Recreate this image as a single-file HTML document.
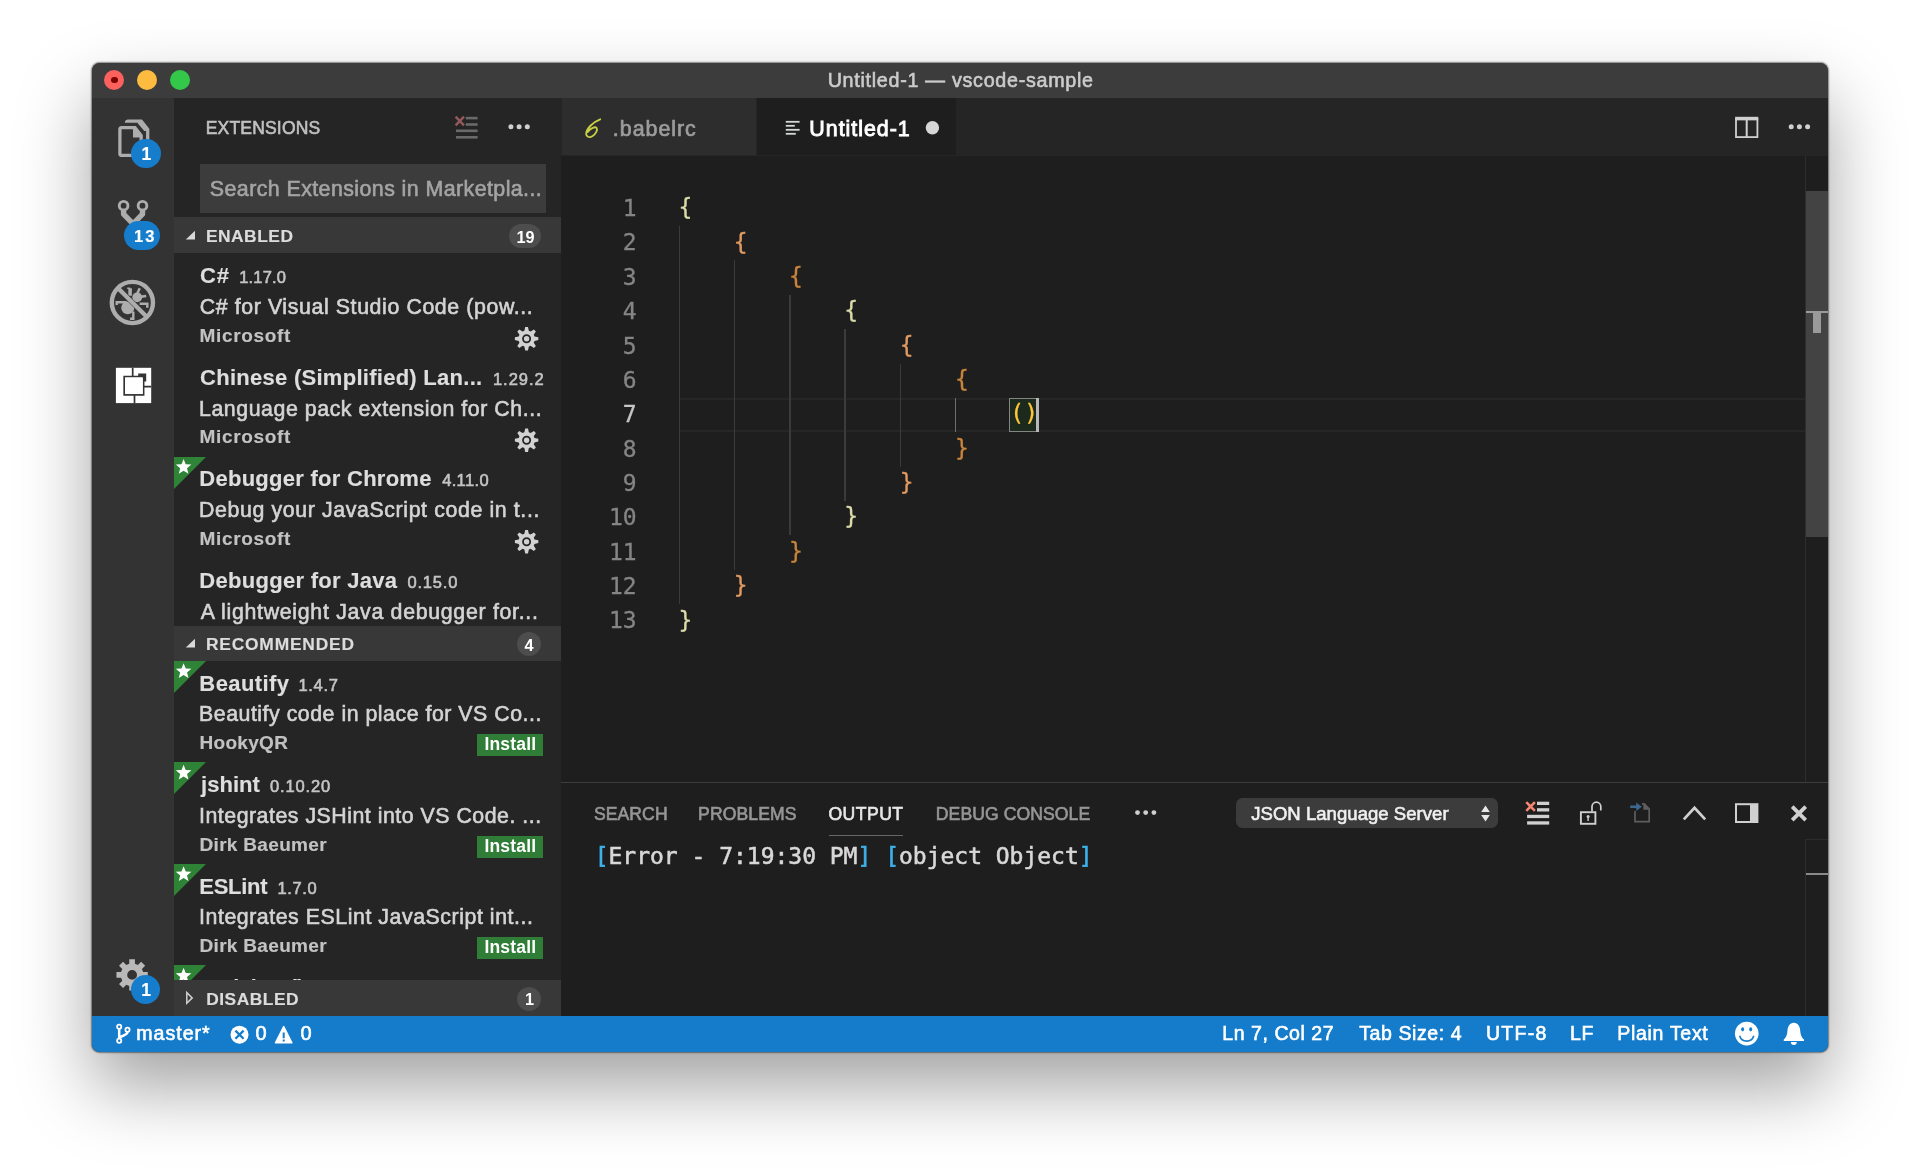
<!DOCTYPE html>
<html lang="en">
<head>
<meta charset="utf-8">
<title>Untitled-1 — vscode-sample</title>
<style>
html,body{margin:0;padding:0;}
body{width:1920px;height:1173px;background:#ffffff;position:relative;overflow:hidden;font-family:"Liberation Sans",sans-serif;}
#shadow{position:absolute;left:91.7px;top:62.6px;width:1736.7px;height:989.4px;border-radius:8px;background:#3c3c3c;
  box-shadow:0 0 1.5px 0.5px rgba(0,0,0,.45), 0 35px 72px rgba(0,0,0,.37);}
#win{position:absolute;left:92px;top:63px;width:1736.4px;height:989px;border-radius:8px;overflow:hidden;}
#in{position:absolute;left:-92px;top:-63px;width:1920px;height:1173px;will-change:transform;}
.b{position:absolute;}
.t{position:absolute;white-space:pre;line-height:30px;height:30px;-webkit-text-stroke:0.6px;}
.s{font-family:"Liberation Sans",sans-serif;}
.m{font-family:"DejaVu Sans Mono","Liberation Mono",monospace;}
.ln{position:absolute;left:561px;width:75.6px;text-align:right;font-family:"DejaVu Sans Mono","Liberation Mono",monospace;font-size:22.97px;line-height:34.36px;height:34.36px;white-space:pre;-webkit-text-stroke:0.3px;}
.cd{position:absolute;font-family:"DejaVu Sans Mono","Liberation Mono",monospace;font-size:22.97px;line-height:34.36px;height:34.36px;white-space:pre;-webkit-text-stroke:0.3px;}
.ig{position:absolute;}
svg{position:absolute;overflow:visible;}
.hdr{position:absolute;left:174px;width:387px;height:36px;background:#383838;}
.pill{position:absolute;background:#4d4d4d;border-radius:13px;}
.tri{position:absolute;left:174px;width:0;height:0;border-top:32px solid #2f8337;border-right:32px solid transparent;}
.inst{position:absolute;left:477px;width:66px;height:22px;background:#2f7d36;}
.badge{position:absolute;background:#167dcc;border-radius:15px;}
</style>
</head>
<body>
<div id="shadow"></div>
<div id="win"><div id="in">
  <!-- base blocks -->
  <div class="b" style="left:92px;top:62px;width:1737px;height:36px;background:#3c3c3c;"></div>
  <div class="b" style="left:92px;top:98px;width:82px;height:918px;background:#333333;"></div>
  <div class="b" style="left:174px;top:98px;width:387px;height:918px;background:#252526;"></div>
  <div class="b" style="left:561px;top:98px;width:1268px;height:918px;background:#1e1e1e;"></div>
  <div class="b" style="left:561px;top:98px;width:1268px;height:57.5px;background:#252526;"></div>
  <div class="b" style="left:561.5px;top:98px;width:194.5px;height:57px;background:#2d2d2d;"></div>
  <div class="b" style="left:756.5px;top:98px;width:199.8px;height:57.4px;background:#1e1e1e;"></div>
  <div class="b" style="left:92px;top:1016px;width:1737px;height:36px;background:#157ccb;"></div>
  <!-- traffic lights -->
  <div class="b" style="left:104.4px;top:70px;width:20px;height:20px;border-radius:50%;background:#fc615d;"></div>
  <div class="b" style="left:111.2px;top:76.9px;width:6.4px;height:6.4px;border-radius:50%;background:#7a0400;"></div>
  <div class="b" style="left:137.2px;top:70px;width:20px;height:20px;border-radius:50%;background:#fdbc40;"></div>
  <div class="b" style="left:170px;top:70px;width:20px;height:20px;border-radius:50%;background:#34c84a;"></div>

  <!-- sidebar -->
  <div class="b" style="left:200px;top:163.5px;width:346px;height:49px;background:#3c3c3c;"></div>
  <div class="hdr" style="top:217.3px;"></div>
  <!--ROWDECOR-->
  <div class="tri" style="top:456.5px;"></div>
  <div class="tri" style="top:660.8px;"></div>
  <div class="tri" style="top:762.3px;"></div>
  <div class="tri" style="top:863.8px;"></div>
  <div class="tri" style="top:965.3px;"></div>
  <div class="inst" style="top:734px;"></div>
  <div class="inst" style="top:835.5px;"></div>
  <div class="inst" style="top:937px;"></div>

<span class="t s" style="left:200.01px;top:261.00px;font-size:22.0px;color:#dedede;letter-spacing:0.769px;font-weight:700;-webkit-text-stroke:0.15px;">C#</span>
<span class="t s" style="left:239.27px;top:262.00px;font-size:16.5px;color:#c4c4c4;letter-spacing:0.154px;">1.17.0</span>
<span class="t s" style="left:199.70px;top:292.00px;font-size:21.3px;color:#d4d4d4;letter-spacing:0.617px;">C# for Visual Studio Code (pow...</span>
<span class="t s" style="left:199.51px;top:321.00px;font-size:19px;color:#c2c2c2;letter-spacing:0.673px;font-weight:700;-webkit-text-stroke:0.15px;">Microsoft</span>
<span class="t s" style="left:200.01px;top:363.00px;font-size:22.0px;color:#dedede;letter-spacing:0.275px;font-weight:700;-webkit-text-stroke:0.15px;">Chinese (Simplified) Lan...</span>
<span class="t s" style="left:492.97px;top:364.00px;font-size:16.5px;color:#c4c4c4;letter-spacing:0.965px;">1.29.2</span>
<span class="t s" style="left:199.04px;top:394.00px;font-size:21.3px;color:#d4d4d4;letter-spacing:0.567px;">Language pack extension for Ch...</span>
<span class="t s" style="left:199.51px;top:422.00px;font-size:19px;color:#c2c2c2;letter-spacing:0.673px;font-weight:700;-webkit-text-stroke:0.15px;">Microsoft</span>
<span class="t s" style="left:199.32px;top:464.00px;font-size:22.0px;color:#dedede;letter-spacing:0.265px;font-weight:700;-webkit-text-stroke:0.15px;">Debugger for Chrome</span>
<span class="t s" style="left:442.14px;top:465.00px;font-size:16.5px;color:#c4c4c4;letter-spacing:0.364px;">4.11.0</span>
<span class="t s" style="left:199.04px;top:495.00px;font-size:21.3px;color:#d4d4d4;letter-spacing:0.628px;">Debug your JavaScript code in t...</span>
<span class="t s" style="left:199.51px;top:524.00px;font-size:19px;color:#c2c2c2;letter-spacing:0.673px;font-weight:700;-webkit-text-stroke:0.15px;">Microsoft</span>
<span class="t s" style="left:199.32px;top:566.00px;font-size:22.0px;color:#dedede;letter-spacing:0.286px;font-weight:700;-webkit-text-stroke:0.15px;">Debugger for Java</span>
<span class="t s" style="left:407.48px;top:567.00px;font-size:16.5px;color:#c4c4c4;letter-spacing:0.810px;">0.15.0</span>
<span class="t s" style="left:200.70px;top:597.00px;font-size:21.3px;color:#d4d4d4;letter-spacing:0.711px;">A lightweight Java debugger for...</span>
<span class="t s" style="left:199.32px;top:669.00px;font-size:22.0px;color:#dedede;letter-spacing:0.427px;font-weight:700;-webkit-text-stroke:0.15px;">Beautify</span>
<span class="t s" style="left:298.47px;top:670.00px;font-size:16.5px;color:#c4c4c4;letter-spacing:0.675px;">1.4.7</span>
<span class="t s" style="left:199.04px;top:699.00px;font-size:21.3px;color:#d4d4d4;letter-spacing:0.529px;">Beautify code in place for VS Co...</span>
<span class="t s" style="left:199.51px;top:728.00px;font-size:19px;color:#c2c2c2;letter-spacing:0.297px;font-weight:700;-webkit-text-stroke:0.15px;">HookyQR</span>
<span class="t s" style="left:484.41px;top:729.00px;font-size:17.5px;color:#ffffff;letter-spacing:0.193px;font-weight:700;-webkit-text-stroke:0px;">Install</span>
<span class="t s" style="left:201.04px;top:770.00px;font-size:22.0px;color:#dedede;letter-spacing:0.020px;font-weight:700;-webkit-text-stroke:0.15px;">jshint</span>
<span class="t s" style="left:269.98px;top:771.00px;font-size:16.5px;color:#c4c4c4;letter-spacing:0.879px;">0.10.20</span>
<span class="t s" style="left:199.04px;top:801.00px;font-size:21.3px;color:#d4d4d4;letter-spacing:0.522px;">Integrates JSHint into VS Code. ...</span>
<span class="t s" style="left:199.51px;top:830.00px;font-size:19px;color:#c2c2c2;letter-spacing:0.318px;font-weight:700;-webkit-text-stroke:0.15px;">Dirk Baeumer</span>
<span class="t s" style="left:484.41px;top:831.00px;font-size:17.5px;color:#ffffff;letter-spacing:0.193px;font-weight:700;-webkit-text-stroke:0px;">Install</span>
<span class="t s" style="left:199.32px;top:872.00px;font-size:22.0px;color:#dedede;letter-spacing:-0.296px;font-weight:700;-webkit-text-stroke:0.15px;">ESLint</span>
<span class="t s" style="left:277.47px;top:873.00px;font-size:16.5px;color:#c4c4c4;letter-spacing:0.636px;">1.7.0</span>
<span class="t s" style="left:199.04px;top:902.00px;font-size:21.3px;color:#d4d4d4;letter-spacing:0.558px;">Integrates ESLint JavaScript int...</span>
<span class="t s" style="left:199.51px;top:931.00px;font-size:19px;color:#c2c2c2;letter-spacing:0.318px;font-weight:700;-webkit-text-stroke:0.15px;">Dirk Baeumer</span>
<span class="t s" style="left:484.41px;top:932.00px;font-size:17.5px;color:#ffffff;letter-spacing:0.193px;font-weight:700;-webkit-text-stroke:0px;">Install</span>
<span class="t s" style="left:199.32px;top:973.00px;font-size:22.0px;color:#dedede;letter-spacing:-2.157px;font-weight:700;-webkit-text-stroke:0.15px;">markdownlint</span>
<span class="t s" style="left:328.98px;top:974.00px;font-size:16.5px;color:#c4c4c4;letter-spacing:0.610px;">0.22.0</span>
<svg width="1920" height="1173" viewBox="0 0 1920 1173" style="left:0;top:0"><path fill="#ffffff" d="M183.60 458.90 L185.72 464.19 L191.40 464.57 L187.02 468.21 L188.42 473.73 L183.60 470.70 L178.78 473.73 L180.18 468.21 L175.80 464.57 L181.48 464.19Z"/>
<path fill="#ffffff" d="M183.60 663.20 L185.72 668.49 L191.40 668.87 L187.02 672.51 L188.42 678.03 L183.60 675.00 L178.78 678.03 L180.18 672.51 L175.80 668.87 L181.48 668.49Z"/>
<path fill="#ffffff" d="M183.60 764.70 L185.72 769.99 L191.40 770.37 L187.02 774.01 L188.42 779.53 L183.60 776.50 L178.78 779.53 L180.18 774.01 L175.80 770.37 L181.48 769.99Z"/>
<path fill="#ffffff" d="M183.60 866.20 L185.72 871.49 L191.40 871.87 L187.02 875.51 L188.42 881.03 L183.60 878.00 L178.78 881.03 L180.18 875.51 L175.80 871.87 L181.48 871.49Z"/>
<path fill="#ffffff" d="M183.60 967.70 L185.72 972.99 L191.40 973.37 L187.02 977.01 L188.42 982.53 L183.60 979.50 L178.78 982.53 L180.18 977.01 L175.80 973.37 L181.48 972.99Z"/>
<path fill-rule="evenodd" fill="#d2d2d2" d="M524.37 330.81 L525.21 326.98 L527.99 326.98 L528.83 330.81 L530.61 331.55 L533.91 329.43 L535.87 331.39 L533.75 334.69 L534.49 336.47 L538.32 337.31 L538.32 340.09 L534.49 340.93 L533.75 342.71 L535.87 346.01 L533.91 347.97 L530.61 345.85 L528.83 346.59 L527.99 350.42 L525.21 350.42 L524.37 346.59 L522.59 345.85 L519.29 347.97 L517.33 346.01 L519.45 342.71 L518.71 340.93 L514.88 340.09 L514.88 337.31 L518.71 336.47 L519.45 334.69 L517.33 331.39 L519.29 329.43 L522.59 331.55ZM522.10 338.70a4.50 4.50 0 1 0 9.00 0a4.50 4.50 0 1 0 -9.00 0Z"/><circle cx="526.6" cy="338.7" r="2.7" fill="#d2d2d2"/>
<path fill-rule="evenodd" fill="#d2d2d2" d="M524.37 432.31 L525.21 428.48 L527.99 428.48 L528.83 432.31 L530.61 433.05 L533.91 430.93 L535.87 432.89 L533.75 436.19 L534.49 437.97 L538.32 438.81 L538.32 441.59 L534.49 442.43 L533.75 444.21 L535.87 447.51 L533.91 449.47 L530.61 447.35 L528.83 448.09 L527.99 451.92 L525.21 451.92 L524.37 448.09 L522.59 447.35 L519.29 449.47 L517.33 447.51 L519.45 444.21 L518.71 442.43 L514.88 441.59 L514.88 438.81 L518.71 437.97 L519.45 436.19 L517.33 432.89 L519.29 430.93 L522.59 433.05ZM522.10 440.20a4.50 4.50 0 1 0 9.00 0a4.50 4.50 0 1 0 -9.00 0Z"/><circle cx="526.6" cy="440.2" r="2.7" fill="#d2d2d2"/>
<path fill-rule="evenodd" fill="#d2d2d2" d="M524.37 533.81 L525.21 529.98 L527.99 529.98 L528.83 533.81 L530.61 534.55 L533.91 532.43 L535.87 534.39 L533.75 537.69 L534.49 539.47 L538.32 540.31 L538.32 543.09 L534.49 543.93 L533.75 545.71 L535.87 549.01 L533.91 550.97 L530.61 548.85 L528.83 549.59 L527.99 553.42 L525.21 553.42 L524.37 549.59 L522.59 548.85 L519.29 550.97 L517.33 549.01 L519.45 545.71 L518.71 543.93 L514.88 543.09 L514.88 540.31 L518.71 539.47 L519.45 537.69 L517.33 534.39 L519.29 532.43 L522.59 534.55ZM522.10 541.70a4.50 4.50 0 1 0 9.00 0a4.50 4.50 0 1 0 -9.00 0Z"/><circle cx="526.6" cy="541.7" r="2.7" fill="#d2d2d2"/></svg>
  <!-- editor current line -->
  <div class="b" style="left:679.6px;top:397.9px;width:1126px;height:30.4px;border-top:2px solid #262626;border-bottom:2px solid #262626;"></div>
  <!-- bracket match box + cursor -->
  <div class="b" style="left:1009px;top:398px;width:27px;height:32px;border:1.2px solid #858585;background:#1c2a1e;"></div>
  <div class="b" style="left:1036px;top:398px;width:2.6px;height:34.4px;background:#b8b8b8;"></div>
  <!-- scrollbar -->
  <div class="b" style="left:1805.3px;top:155.5px;width:1.2px;height:626px;background:#2e2e2e;"></div>
  <div class="b" style="left:1805.5px;top:191.4px;width:24px;height:346px;background:#434343;"></div>
  <div class="b" style="left:1805.5px;top:311px;width:24px;height:2px;background:#9a9a9a;"></div>
  <div class="b" style="left:1813.3px;top:312px;width:8px;height:20.5px;background:#9a9a9a;"></div>
<span class="ln" style="top:191.10px;color:#858585">1</span>
<span class="ln" style="top:225.46px;color:#858585">2</span>
<span class="ln" style="top:259.82px;color:#858585">3</span>
<span class="ln" style="top:294.18px;color:#858585">4</span>
<span class="ln" style="top:328.54px;color:#858585">5</span>
<span class="ln" style="top:362.90px;color:#858585">6</span>
<span class="ln" style="top:397.26px;color:#c6c6c6">7</span>
<span class="ln" style="top:431.62px;color:#858585">8</span>
<span class="ln" style="top:465.98px;color:#858585">9</span>
<span class="ln" style="top:500.34px;color:#858585">10</span>
<span class="ln" style="top:534.70px;color:#858585">11</span>
<span class="ln" style="top:569.06px;color:#858585">12</span>
<span class="ln" style="top:603.42px;color:#858585">13</span>
<span class="cd" style="left:678.40px;top:190.20px;color:#dcdcaa">{</span>
<span class="cd" style="left:678.40px;top:602.52px;color:#dcdcaa">}</span>
<span class="cd" style="left:733.72px;top:224.56px;color:#e09a62">{</span>
<span class="cd" style="left:733.72px;top:568.16px;color:#e09a62">}</span>
<span class="cd" style="left:789.04px;top:258.92px;color:#c8843c">{</span>
<span class="cd" style="left:789.04px;top:533.80px;color:#c8843c">}</span>
<span class="cd" style="left:844.36px;top:293.28px;color:#dcdcaa">{</span>
<span class="cd" style="left:844.36px;top:499.44px;color:#dcdcaa">}</span>
<span class="cd" style="left:899.68px;top:327.64px;color:#e09a62">{</span>
<span class="cd" style="left:899.68px;top:465.08px;color:#e09a62">}</span>
<span class="cd" style="left:955.00px;top:362.00px;color:#c8843c">{</span>
<span class="cd" style="left:955.00px;top:430.72px;color:#c8843c">}</span>
<span class="cd" style="left:1010.32px;top:396.36px;color:#ffc638">()</span>
<div class="ig" style="left:678.70px;top:226.06px;height:377.96px;width:1.4px;background:#3b3b3b"></div>
<div class="ig" style="left:733.95px;top:260.42px;height:309.24px;width:1.4px;background:#3b3b3b"></div>
<div class="ig" style="left:789.20px;top:294.78px;height:240.52px;width:1.4px;background:#3b3b3b"></div>
<div class="ig" style="left:844.45px;top:329.14px;height:171.80px;width:1.4px;background:#3b3b3b"></div>
<div class="ig" style="left:899.70px;top:363.50px;height:103.08px;width:1.4px;background:#3b3b3b"></div>
<div class="ig" style="left:954.95px;top:397.86px;height:34.36px;width:1.5px;background:#6e6e6e"></div>
<span class="cd" style="left:594.7px;top:839.0px;color:#d8d8d8;-webkit-text-stroke:0.55px"><span style="color:#3cb1ea">[</span>Error - 7:19:30 PM<span style="color:#3cb1ea">]</span> <span style="color:#3cb1ea">[</span>object Object<span style="color:#3cb1ea">]</span></span>
  <!-- panel -->
  <div class="b" style="left:561px;top:781.6px;width:1268px;height:1.4px;background:#3d3d3d;"></div>
  <div class="b" style="left:828.5px;top:834.5px;width:74px;height:1.3px;background:#666666;"></div>
  <div class="b" style="left:1236px;top:798.2px;width:262px;height:29.8px;border-radius:6.5px;background:#3c3c3c;"></div>
  <div class="b" style="left:1805.3px;top:839.3px;width:1.2px;height:177px;background:#2e2e2e;"></div>
  <div class="b" style="left:1805.3px;top:839.3px;width:24px;height:1.2px;background:#2c2c2c;"></div>
  <div class="b" style="left:1805.5px;top:872.6px;width:24px;height:2px;background:#8a8a8a;"></div>
<!--PANELTEXT-->

  <!-- section headers (over rows) -->
  <div class="hdr" style="top:625.5px;height:35.3px;"></div>
  <div class="hdr" style="top:980px;"></div>
  <div class="pill" style="left:509px;top:224.4px;width:32px;height:24px;"></div>
  <div class="pill" style="left:517px;top:632px;width:24.3px;height:24px;"></div>
  <div class="pill" style="left:517px;top:986.5px;width:24.3px;height:24px;"></div>

<svg width="1920" height="1173" viewBox="0 0 1920 1173" style="left:0;top:0"><g transform="translate(106.8 112.9) scale(1.636)"><path fill="#adadad" d="M17.705 8H9s-2 .078-2 2v15s0 2 2 2l11-.004C22 27 22 25 22 25V13.509L17.705 8zM16 10v5h4v10H9V10h7zm5.509-6H13s-1.974.078-2 2h8v.454L22.931 11H24v12c2 0 2-1.995 2-1.995V9.648L21.509 4z"/></g>
<g fill="none" stroke="#adadad"><circle cx="123.6" cy="205.7" r="4.35" stroke-width="2.9"/><circle cx="142.5" cy="205.7" r="4.35" stroke-width="2.9"/><path stroke-width="5.4" stroke-linejoin="round" d="M123.6 210.8v3.4l9.45 9.6l9.45-9.600v-3.400"/><path stroke-width="5.4" d="M133.05 222v10"/></g>
<g><circle cx="132.4" cy="302.5" r="20.6" fill="none" stroke="#adadad" stroke-width="4.4"/><clipPath id="cpa"><path d="M100 273.800l50 50v16h-50z"/></clipPath><clipPath id="cpb"><path d="M110 276.400l50 50v-56h-50z"/></clipPath><g clip-path="url(#cpa)"><ellipse cx="127.800" cy="307.800" rx="6.600" ry="6.400" fill="#adadad"/><path fill="none" stroke="#adadad" stroke-width="2.400" d="M116.700 305v-2.700h10M133.300 311.500v7.200h-3.200"/></g><g clip-path="url(#cpb)"><circle cx="137.200" cy="297.300" r="4.900" fill="#adadad"/><path fill="none" stroke="#adadad" stroke-width="3.600" d="M130.100 288.300v7.500"/><path fill="none" stroke="#adadad" stroke-width="1.600" d="M127.200 288.300h3"/><path fill="none" stroke="#adadad" stroke-width="2.500" d="M136.800 294.500l2.900-6.200M140.800 296.800l5.400-0.900M139.600 303.700h7.700v4"/></g><path stroke="#adadad" stroke-width="4.300" d="M117.600 287.700l29.600 29.600"/></g>
<g transform="translate(115.9 367.8)"><rect x="0" y="0" width="35.3" height="35.3" fill="#ffffff"/><g fill="none" stroke="#333333" stroke-width="1.700"><rect x="8.3" y="8.800" width="19.400" height="18.300"/><path d="M16.800 0v8.800M27.700 18.900h7.600M18.600 27.100v8.200"/></g><path fill="#333333" d="M22.300 5.800h8v8h-2.600v-5.400h-5.400z"/><rect x="9.200" y="9.700" width="17.600" height="16.500" fill="#ffffff"/></g>
<path fill-rule="evenodd" fill="#b9b9b9" d="M129.26 963.86 L129.24 959.26 L134.96 959.26 L134.94 963.86 L137.90 965.09 L141.14 961.82 L145.18 965.86 L141.91 969.10 L143.14 972.06 L147.74 972.04 L147.74 977.76 L143.14 977.74 L141.91 980.70 L145.18 983.94 L141.14 987.98 L137.90 984.71 L134.94 985.94 L134.96 990.54 L129.24 990.54 L129.26 985.94 L126.30 984.71 L123.06 987.98 L119.02 983.94 L122.29 980.70 L121.06 977.74 L116.46 977.76 L116.46 972.04 L121.06 972.06 L122.29 969.10 L119.02 965.86 L123.06 961.82 L126.30 965.09ZM127.20 974.90a4.90 4.90 0 1 0 9.80 0a4.90 4.90 0 1 0 -9.80 0Z"/>
<g fill="#6a6a6a"><rect x="465.800" y="116.800" width="11.800" height="2.600"/><rect x="465.800" y="123.200" width="11.800" height="2.600"/><rect x="456" y="129.500" width="21.600" height="2.600"/><rect x="456" y="136" width="21.600" height="2.600"/></g><path stroke="#94595a" stroke-width="2.400" fill="none" d="M455.600 116.600l8.400 8.800M464 116.600l-8.400 8.800"/>
<g fill="#d0d0d0"><circle cx="510.900" cy="126.800" r="2.500"/><circle cx="519.100" cy="126.800" r="2.500"/><circle cx="527.300" cy="126.800" r="2.500"/></g>
<path fill="#d8d8d8" d="M195 230.7v8.900h-9.200z"/>
<path fill="#d8d8d8" d="M195 638.7v8.900h-9.200z"/>
<path fill="none" stroke="#d0d0d0" stroke-width="1.500" stroke-linejoin="miter" d="M186.800 992.600l5.400 5.300l-5.400 5.300z"/>
<path fill="none" stroke="#c9d244" stroke-width="1.800" stroke-linecap="round" d="M600.200 119.300C593 122 586.800 128.500 586.200 133.200C585.800 137 589.500 138 592.600 136C596 133.800 597.800 130 596.600 128C595.400 126.200 590.500 128 587.800 132"/>
<g fill="#d4d7d6"><rect x="785.800" y="120.900" width="13.800" height="1.800"/><rect x="785.800" y="124.900" width="9" height="1.800"/><rect x="785.800" y="128.900" width="13.800" height="1.800"/><rect x="785.800" y="132.900" width="10" height="1.800"/></g>
<circle cx="932.400" cy="127.800" r="6.700" fill="#d6d6d6"/>
<g fill="none" stroke="#d0d0d0"><rect x="1736" y="119.300" width="21.400" height="17.800" stroke-width="1.800"/><path stroke-width="3.400" d="M1735.100 118.500h23.200"/><path stroke-width="2" d="M1746.700 119v18"/></g>
<g fill="#d0d0d0"><circle cx="1791.200" cy="126.800" r="2.500"/><circle cx="1799.400" cy="126.800" r="2.500"/><circle cx="1807.600" cy="126.800" r="2.500"/></g>
<g fill="#cfcfcf"><circle cx="1137.500" cy="812.600" r="2.400"/><circle cx="1145.700" cy="812.600" r="2.400"/><circle cx="1153.900" cy="812.600" r="2.400"/></g>
<path fill="#e8e8e8" d="M1485.500 805.400l4.300 6.700h-8.600zM1485.500 821.600l4.300-6.700h-8.600z"/>
<g fill="#d0d0d0"><rect x="1537" y="801.700" width="12.200" height="3.300"/><rect x="1537" y="808.200" width="12.200" height="3.300"/><rect x="1527.100" y="814.800" width="22.100" height="3.300"/><rect x="1527.100" y="821.300" width="22.100" height="3.300"/></g><path stroke="#f48771" stroke-width="2.600" fill="none" d="M1526.300 802.200l8.600 8.600M1534.900 802.200l-8.600 8.600"/>
<g fill="none" stroke="#d0d0d0"><rect x="1580.900" y="812.200" width="14.500" height="11.600" stroke-width="1.900"/><path stroke-width="1.700" d="M1592 811.400v-4.800a4.400 4.400 0 0 1 8.800 0v3.800"/></g><circle cx="1588.100" cy="816.400" r="1.500" fill="#d0d0d0"/><rect x="1587.400" y="816.400" width="1.400" height="4.600" fill="#d0d0d0"/>
<path fill="none" stroke="#5e5e5e" stroke-width="1.700" d="M1635 811v10.700h14.200v-12.800l-5-5h-2.200"/><path fill="#5e5e5e" d="M1643.400 803.300l6.400 6.400h-6.400z"/><path fill="#3c688d" d="M1630.200 805.500h6v-3l5.600 4.300l-5.600 4.300v-3h-6z"/>
<path fill="none" stroke="#d0d0d0" stroke-width="2.700" d="M1683.800 819.400l10.700-11.600l10.700 11.600"/>
<rect x="1736" y="804.200" width="21.400" height="17.800" fill="none" stroke="#d0d0d0" stroke-width="2"/><rect x="1750" y="804" width="8" height="18" fill="#d0d0d0"/>
<path stroke="#d0d0d0" stroke-width="3.800" fill="none" d="M1792.200 806.600l13.500 13.500M1805.700 806.600l-13.500 13.500"/>
<g fill="none" stroke="#ffffff" stroke-width="1.800"><circle cx="119.200" cy="1026.700" r="2.100"/><circle cx="119.200" cy="1040.700" r="2.100"/><circle cx="127.500" cy="1029.700" r="2.100"/><path stroke-width="2.500" d="M119.200 1029.200v9.100M127.500 1032c-0.300 4.200-7.600 3.200-8.100 6.600"/></g>
<circle cx="239.500" cy="1034.700" r="9" fill="#ffffff"/><path stroke="#157dcb" stroke-width="2.300" d="M235.400 1030.600l8.200 8.200M243.600 1030.600l-8.200 8.200"/>
<path fill="#ffffff" stroke="#ffffff" stroke-width="1.500" stroke-linejoin="round" d="M283.700 1026.600l8.200 16.200h-16.400z"/><path stroke="#157dcb" stroke-width="2" d="M283.700 1032.500v5.700M283.700 1039.400v2"/>
<circle cx="1746.750" cy="1033.600" r="11.800" fill="#ffffff"/><ellipse cx="1742.600" cy="1029.300" rx="1.500" ry="2.100" fill="#157dcb"/><ellipse cx="1750.700" cy="1029.300" rx="1.500" ry="2.100" fill="#157dcb"/><path fill="none" stroke="#157dcb" stroke-width="1.600" d="M1739.600 1035.800a7.400 7.400 0 0 0 14.200 0"/>
<path fill="#ffffff" d="M1793.850 1022.800c4.300 0 6.100 3.800 6.400 8.200c0.200 4 1.500 6.700 3.700 8.600v1.300h-20.200v-1.300c2.200-1.900 3.500-4.600 3.700-8.600c0.300-4.400 2.100-8.200 6.400-8.200zM1790.900 1042.100h5.900a2.950 2.950 0 0 1-5.900 0z"/></svg>
  <!-- activity badges -->
  <div class="badge" style="left:131.4px;top:139.1px;width:29.2px;height:29.2px;"></div>
  <div class="badge" style="left:124px;top:220.7px;width:36.2px;height:29.3px;"></div>
  <div class="badge" style="left:131.1px;top:974.9px;width:29.2px;height:29.2px;"></div>

<span class="t s" style="left:827.67px;top:65.00px;font-size:19.7px;color:#cccccc;letter-spacing:0.723px;">Untitled-1 — vscode-sample</span>
<span class="t s" style="left:205.73px;top:113.00px;font-size:17.5px;color:#c0c0c0;letter-spacing:0.189px;">EXTENSIONS</span>
<span class="t s" style="left:209.83px;top:174.00px;font-size:21.4px;color:#a4a4a4;letter-spacing:0.416px;">Search Extensions in Marketpla...</span>
<span class="t s" style="left:205.91px;top:221.00px;font-size:17.4px;color:#dcdcdc;letter-spacing:0.498px;font-weight:700;-webkit-text-stroke:0.15px;">ENABLED</span>
<span class="t s" style="left:205.91px;top:629.00px;font-size:17.4px;color:#dcdcdc;letter-spacing:0.802px;font-weight:700;-webkit-text-stroke:0.15px;">RECOMMENDED</span>
<span class="t s" style="left:206.16px;top:984.00px;font-size:17.4px;color:#dcdcdc;letter-spacing:0.515px;font-weight:700;-webkit-text-stroke:0.15px;">DISABLED</span>
<span class="t s" style="left:516.48px;top:222.00px;font-size:16.3px;color:#ffffff;letter-spacing:0.094px;font-weight:700;-webkit-text-stroke:0px;">19</span>
<span class="t s" style="left:524.50px;top:630.00px;font-size:16.3px;color:#ffffff;font-weight:700;-webkit-text-stroke:0px;">4</span>
<span class="t s" style="left:524.88px;top:984.00px;font-size:16.3px;color:#ffffff;font-weight:700;-webkit-text-stroke:0px;">1</span>
<span class="t s" style="left:612.83px;top:114.00px;font-size:21.4px;color:#9c9c9c;letter-spacing:0.982px;-webkit-text-stroke:0.7px;">.babelrc</span>
<span class="t s" style="left:809.36px;top:114.00px;font-size:21.4px;color:#ffffff;letter-spacing:0.980px;-webkit-text-stroke:0.9px;">Untitled-1</span>
<span class="t s" style="left:593.95px;top:799.00px;font-size:17.6px;color:#969696;letter-spacing:0.068px;">SEARCH</span>
<span class="t s" style="left:698.12px;top:799.00px;font-size:17.6px;color:#969696;letter-spacing:0.087px;">PROBLEMS</span>
<span class="t s" style="left:828.38px;top:799.00px;font-size:17.6px;color:#e7e7e7;letter-spacing:0.475px;">OUTPUT</span>
<span class="t s" style="left:935.83px;top:799.00px;font-size:17.6px;color:#969696;letter-spacing:0.072px;">DEBUG CONSOLE</span>
<span class="t s" style="left:1251.21px;top:799.00px;font-size:18.5px;color:#f0f0f0;letter-spacing:0.051px;">JSON Language Server</span>
<span class="t s" style="left:136.28px;top:1018.00px;font-size:19.6px;color:#ffffff;letter-spacing:0.979px;">master*</span>
<span class="t s" style="left:255.62px;top:1018.00px;font-size:20px;color:#ffffff;">0</span>
<span class="t s" style="left:300.38px;top:1018.00px;font-size:20px;color:#ffffff;">0</span>
<span class="t s" style="left:1222.28px;top:1018.00px;font-size:19.5px;color:#ffffff;letter-spacing:0.560px;">Ln 7, Col 27</span>
<span class="t s" style="left:1359.20px;top:1018.00px;font-size:19.5px;color:#ffffff;letter-spacing:0.602px;">Tab Size: 4</span>
<span class="t s" style="left:1485.98px;top:1018.00px;font-size:19.5px;color:#ffffff;letter-spacing:1.266px;">UTF-8</span>
<span class="t s" style="left:1569.98px;top:1018.00px;font-size:19.5px;color:#ffffff;letter-spacing:0.705px;">LF</span>
<span class="t s" style="left:1617.28px;top:1018.00px;font-size:19.5px;color:#ffffff;letter-spacing:0.702px;">Plain Text</span>
<span class="t s" style="left:141.61px;top:139.00px;font-size:17.5px;color:#ffffff;font-weight:700;-webkit-text-stroke:0.15px;">1</span>
<span class="t s" style="left:134.07px;top:221.00px;font-size:16.5px;color:#ffffff;letter-spacing:1.889px;font-weight:700;-webkit-text-stroke:0.15px;">13</span>
<span class="t s" style="left:141.31px;top:975.00px;font-size:17.5px;color:#ffffff;font-weight:700;-webkit-text-stroke:0.15px;">1</span>
</div></div>
</body>
</html>
